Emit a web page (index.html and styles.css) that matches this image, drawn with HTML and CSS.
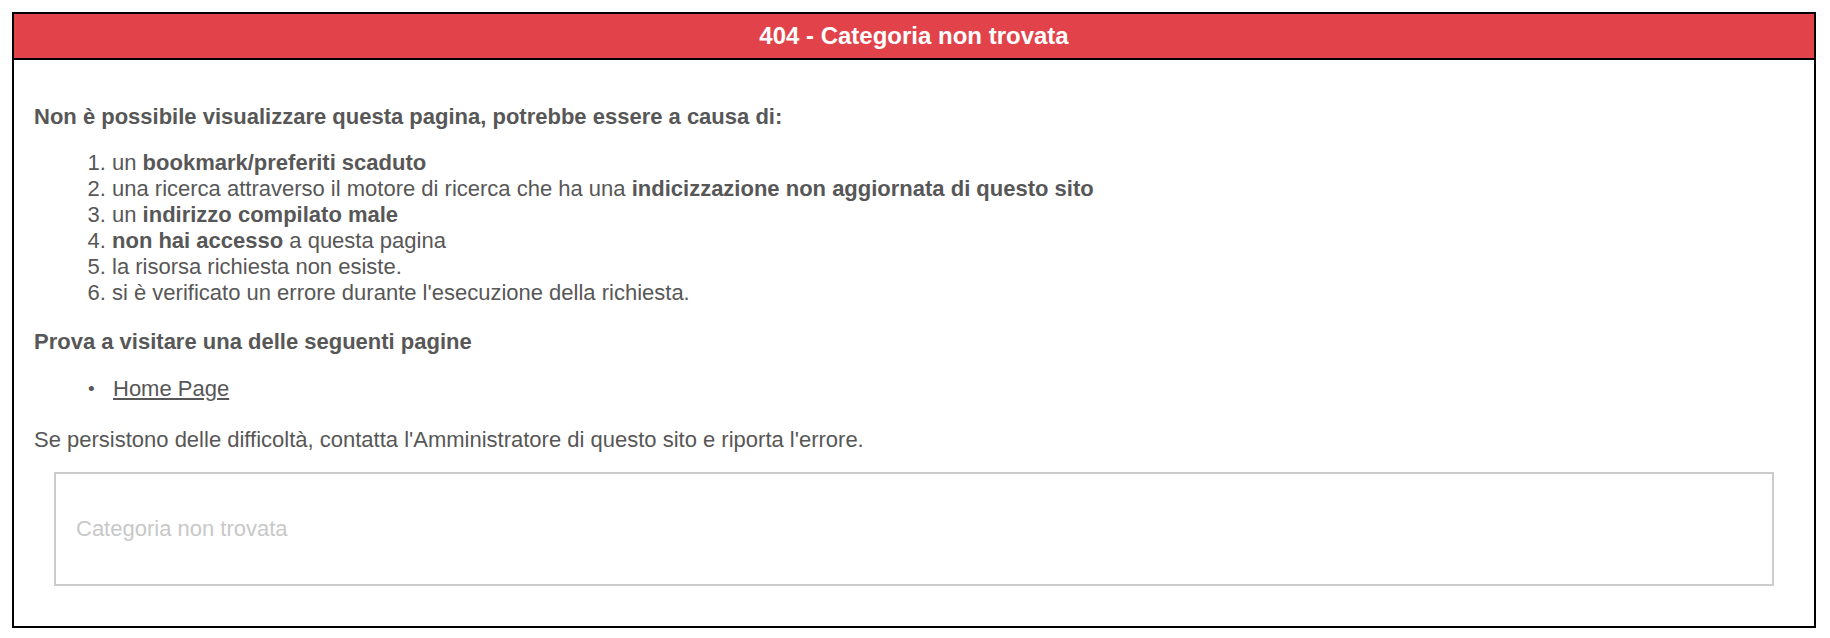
FILE: index.html
```html
<!DOCTYPE html>
<html lang="it">
<head>
<meta charset="utf-8">
<title>404 - Categoria non trovata</title>
<link rel="stylesheet" href="styles.css">
</head>
<body>
<div class="error-box">
  <h1 class="error-title">404 - Categoria non trovata</h1>
  <div class="error-content">
    <p class="lead"><strong>Non è possibile visualizzare questa pagina, potrebbe essere a causa di:</strong></p>
    <ol class="reasons">
      <li>un <strong>bookmark/preferiti scaduto</strong></li>
      <li>una ricerca attraverso il motore di ricerca che ha una <strong>indicizzazione non aggiornata di questo sito</strong></li>
      <li>un <strong>indirizzo compilato male</strong></li>
      <li><strong>non hai accesso</strong> a questa pagina</li>
      <li>la risorsa richiesta non esiste.</li>
      <li>si è verificato un errore durante l'esecuzione della richiesta.</li>
    </ol>
    <p class="lead-2"><strong>Prova a visitare una delle seguenti pagine</strong></p>
    <ul class="links">
      <li><a href="#">Home Page</a></li>
    </ul>
    <p class="contact">Se persistono delle difficoltà, contatta l'Amministratore di questo sito e riporta l'errore.</p>
    <div class="message-box">Categoria non trovata</div>
  </div>
</div>
</body>
</html>
```

FILE: styles.css
```css
html, body {
  background: #ffffff;
}

body {
  margin: 12px 14px 11px 12px;
  font-family: "Liberation Sans", Helvetica, Arial, sans-serif;
  font-size: 22px;
  line-height: 26px;
  color: #575757;
}

.error-box {
  border: 2px solid #000000;
}

.error-title {
  margin: 0;
  background: #e2434a;
  color: #ffffff;
  font-size: 24px;
  font-weight: bold;
  line-height: 44px;
  text-align: center;
  border-bottom: 2px solid #000000;
}

.error-content {
  padding: 44px 20px 40px 20px;
}

.error-content p {
  margin: 0;
}

.error-content strong {
  font-weight: bold;
}

.reasons {
  margin: 20px 0 0 0;
  padding-left: 78px;
}

.lead-2 {
  margin-top: 23px !important;
}

.links {
  margin: 21px 0 0 0;
  padding-left: 54px;
  list-style: none;
}

.links li::before {
  content: "\2022";
  display: inline-block;
  width: 25px;
  font-size: 19px;
  vertical-align: 1px;
}

.links a {
  color: #575757;
  text-decoration: underline;
}

.contact {
  margin-top: 25px !important;
}

.message-box {
  margin: 19px 20px 0 20px;
  border: 2px solid #cccccc;
  padding: 42px 20px;
  color: #c8c8c8;
  font-size: 22px;
  line-height: 26px;
}
```
